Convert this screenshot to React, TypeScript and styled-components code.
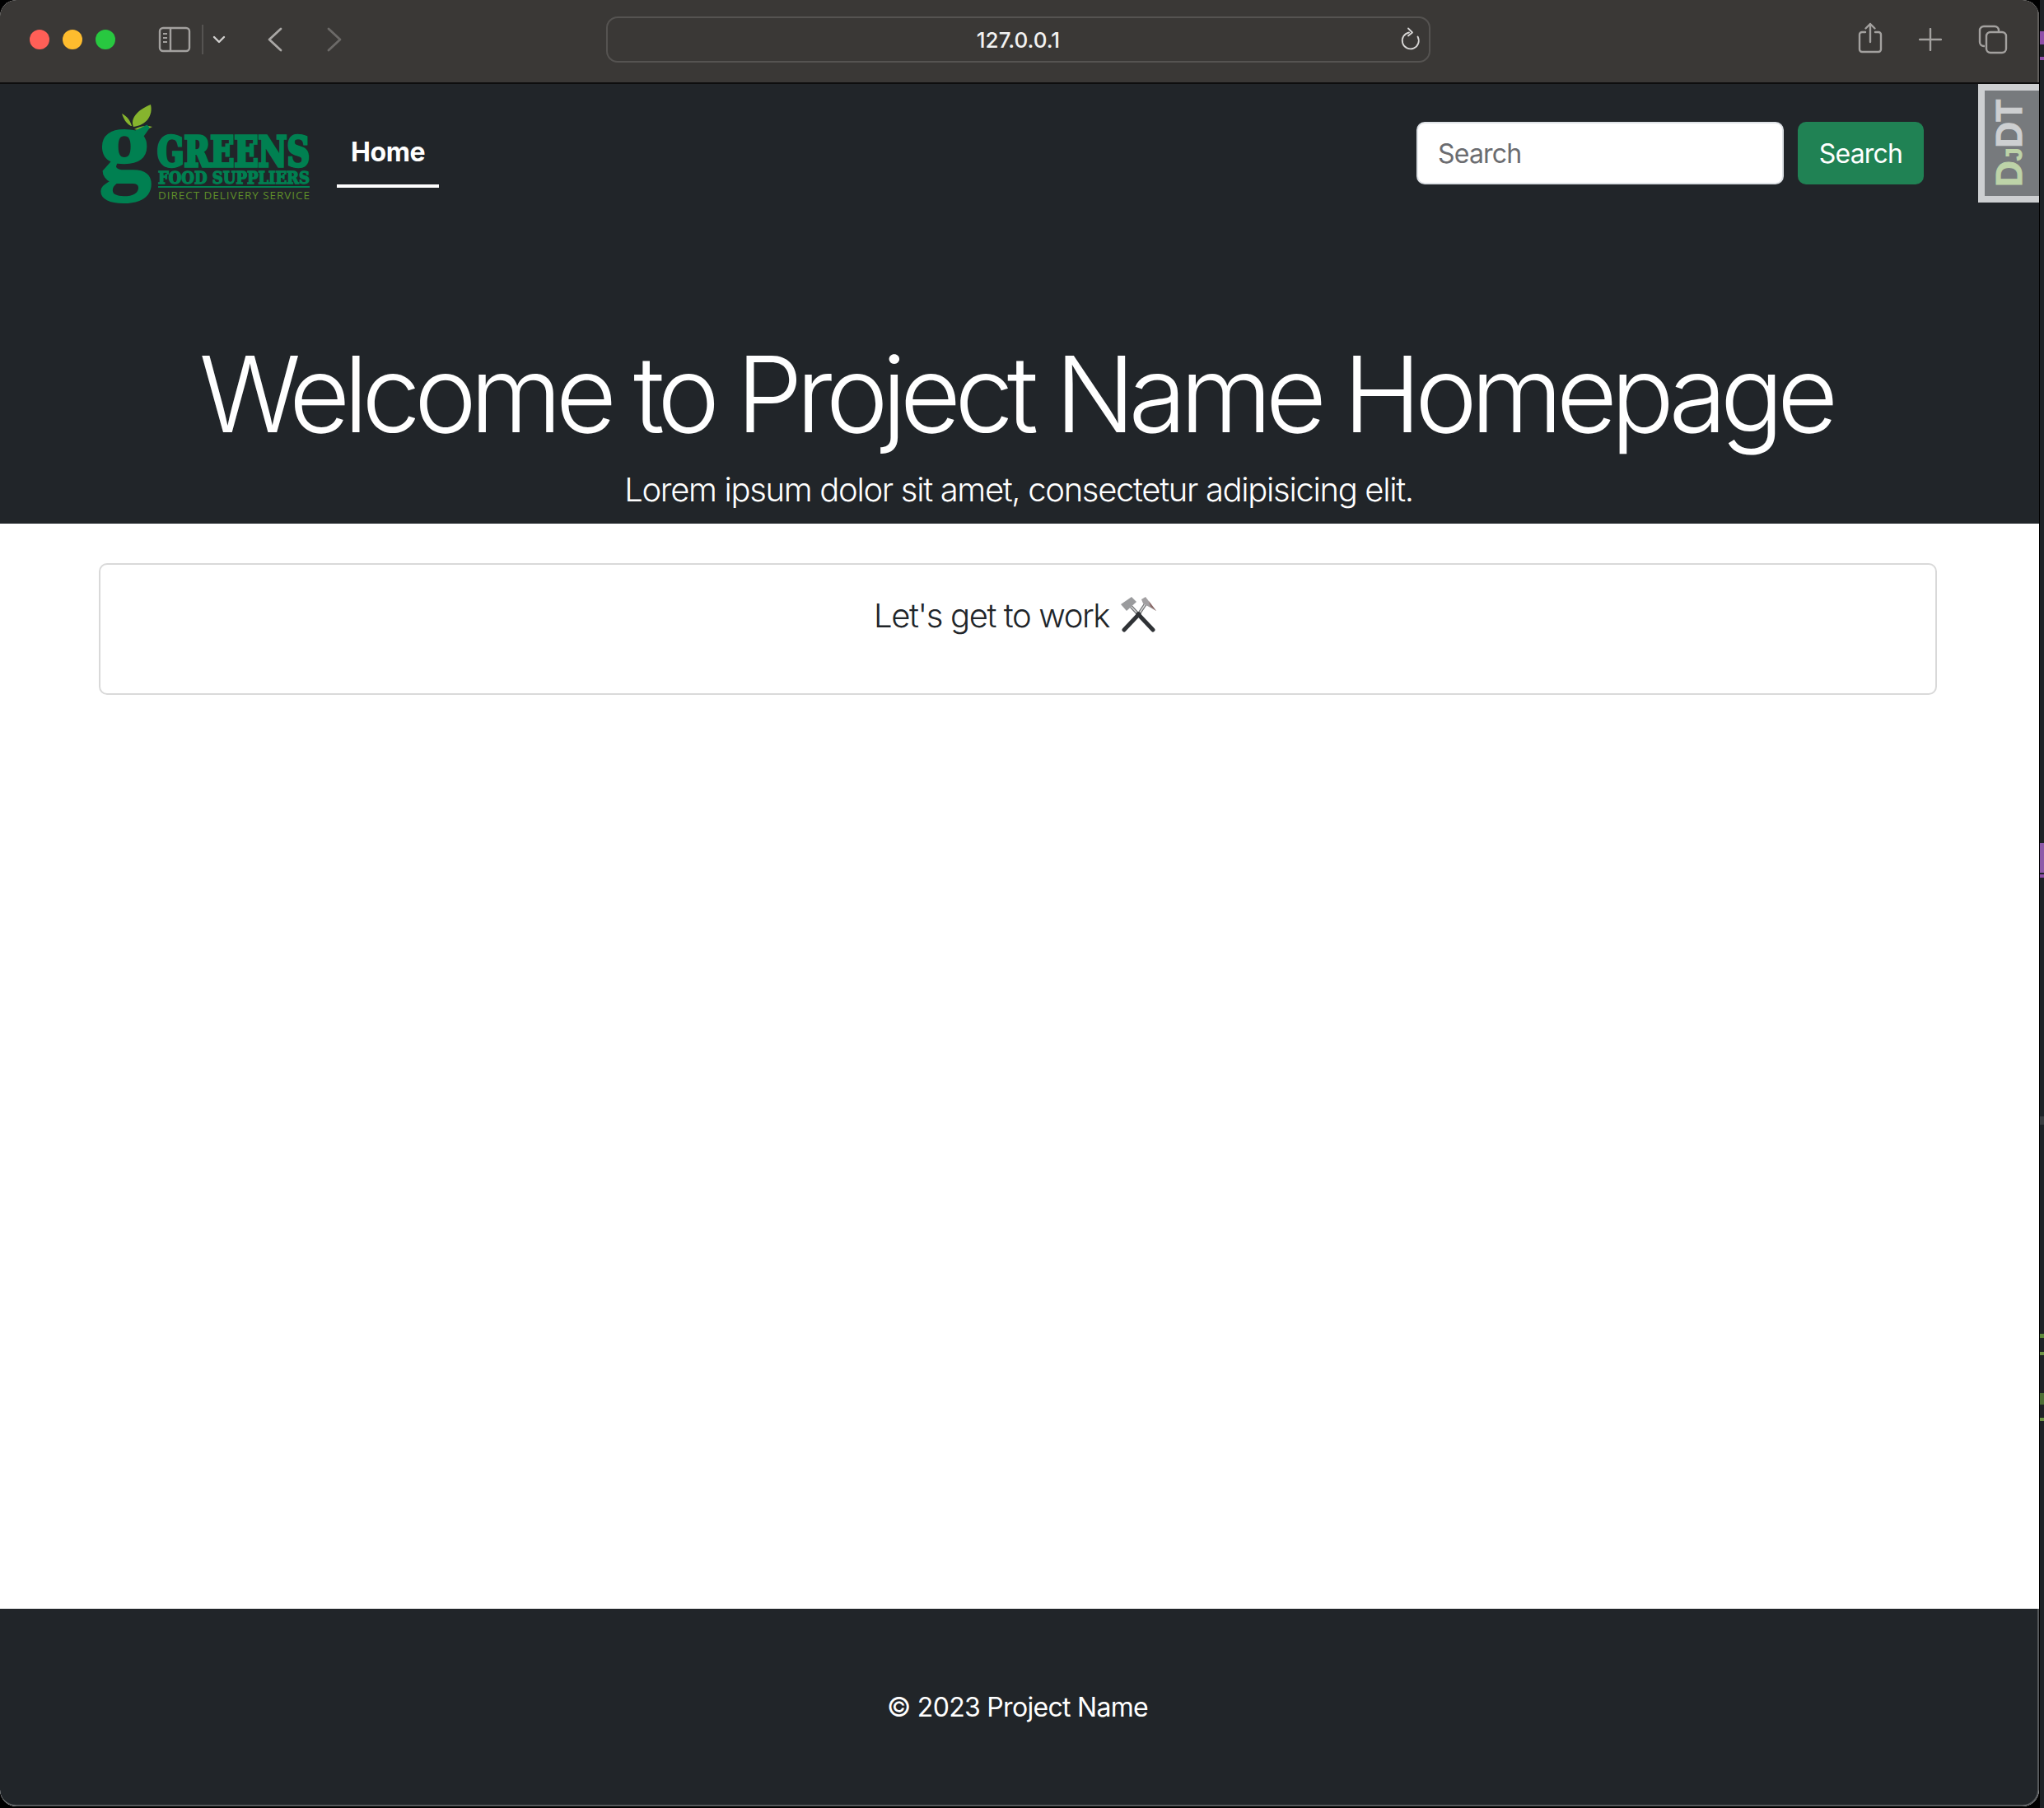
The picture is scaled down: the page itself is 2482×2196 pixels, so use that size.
import styled, { createGlobalStyle } from "styled-components";

const GlobalStyle = createGlobalStyle`
  html, body {
    margin: 0;
    padding: 0;
    background: #000;
  }
  * {
    box-sizing: border-box;
  }
`;

const stripMarks = [
  { top: 38, height: 16, color: "#8e4fa8" },
  { top: 69, height: 4, color: "#8e4fa8" },
  { top: 1024, height: 36, color: "#8e5aa8" },
  { top: 1062, height: 4, color: "#8e4fa8" },
  { top: 1356, height: 10, color: "#3a3d40" },
  { top: 1620, height: 5, color: "#5f8a3c" },
  { top: 1642, height: 4, color: "#6f9446" },
  { top: 1692, height: 14, color: "#4d6f36" },
  { top: 1722, height: 4, color: "#6f9446" },
];

function SidebarIcon() {
  return (
    <svg width="40" height="32" viewBox="0 0 40 32" fill="none" stroke="#a3a19f" strokeWidth="2.4">
      <rect x="2" y="2" width="36" height="28" rx="4" />
      <path d="M15 2v28" />
      <path d="M6 9h5M6 14h5M6 19h5" strokeWidth="2" />
    </svg>
  );
}

function Chevron({ d, dim }: { d: string; dim?: boolean }) {
  return (
    <svg width="20" height="30" viewBox="0 0 20 30" fill="none" stroke={dim ? "#6c6a68" : "#a9a7a5"} strokeWidth="2.8" strokeLinecap="round" strokeLinejoin="round">
      <path d={d} />
    </svg>
  );
}

function ReloadIcon() {
  return (
    <svg width="26" height="30" viewBox="0 0 26 30" fill="none" stroke="#d8d7d6" strokeWidth="1.8" strokeLinecap="round" strokeLinejoin="round">
      <path d="M11 6.500a10 10 0 1 0 10.500 5" />
      <path d="M10 1.500l5 5-5 4" />
    </svg>
  );
}

function ShareIcon() {
  return (
    <svg width="30" height="38" viewBox="0 0 30 38" fill="none" stroke="#a3a19f" strokeWidth="2.4" strokeLinecap="round" strokeLinejoin="round">
      <path d="M9 12H5a3 3 0 0 0-3 3v18a3 3 0 0 0 3 3h20a3 3 0 0 0 3-3V15a3 3 0 0 0-3-3h-4" />
      <path d="M15 24V2M9.500 7.500L15 2l5.500 5.500" />
    </svg>
  );
}

function PlusIcon() {
  return (
    <svg width="28" height="28" viewBox="0 0 28 28" fill="none" stroke="#a3a19f" strokeWidth="2.4" strokeLinecap="round">
      <path d="M14 1v26M1 14h26" />
    </svg>
  );
}

function TabsIcon() {
  return (
    <svg width="36" height="36" viewBox="0 0 36 36" fill="none" stroke="#a3a19f" strokeWidth="2.4">
      <path d="M8 26H7a5 5 0 0 1-5-5V7a5 5 0 0 1 5-5h13a5 5 0 0 1 5 5v2" />
      <rect x="10" y="9" width="24" height="25" rx="5" />
    </svg>
  );
}

function Logo() {
  return (
    <LogoSvg width="260" height="122" viewBox="0 0 260 122">
      <path d="M42 28C38 18 46 8 63 1C66 14 58 26 42 28Z" fill="#86b42e" />
      <path d="M39 27C33 24 30 18 28 12C34 15 38 20 40 27Z" fill="#86b42e" />
      <path d="M43 31C50 27 58 26 65 28C58 32 50 33 43 31Z" fill="#86b42e" />
      <text x="0" y="92" fontFamily="'Liberation Serif', serif" fontWeight="700" fontSize="128" fill="#008051" stroke="#008051" strokeWidth="2">g</text>
      <text x="71" y="76" textLength="185" lengthAdjust="spacingAndGlyphs" fontFamily="'DejaVu Serif Condensed', 'DejaVu Serif', serif" fontWeight="700" fontSize="50" fill="#008051" stroke="#008051" strokeWidth="3.400">GREENS</text>
      <text x="72" y="97" textLength="184" lengthAdjust="spacingAndGlyphs" fontFamily="'DejaVu Serif Condensed', 'DejaVu Serif', serif" fontWeight="700" fontSize="20" fill="#008051" stroke="#008051" strokeWidth="1.300">FOOD SUPPLIERS</text>
      <rect x="72" y="100" width="184" height="2" fill="#008051" />
      <text x="72" y="116" textLength="184" lengthAdjust="spacing" fontFamily="'Open Sans', sans-serif" fontWeight="400" fontSize="13.500" fill="#5f8f2a">DIRECT DELIVERY SERVICE</text>
    </LogoSvg>
  );
}

function HammersIcon() {
  return (
    <svg width="44" height="44" viewBox="0 0 44 44" fill="none">
      <path d="M10 9L22 22" stroke="#6d6f72" strokeWidth="4" />
      <path d="M10 9L22 22" stroke="#d8d8d8" strokeWidth="1.500" />
      <path d="M31 7L21 22" stroke="#6d6f72" strokeWidth="4" />
      <path d="M31 7L21 22" stroke="#d8d8d8" strokeWidth="1.500" />
      <path d="M21 21L39 40" stroke="#2f3236" strokeWidth="5" strokeLinecap="round" />
      <path d="M22 21L4 40" stroke="#2f3236" strokeWidth="5" strokeLinecap="round" />
      <path d="M0 9L13 0L19 6L7 17Z" fill="#9a9b9d" />
      <path d="M25 3L30 0L43 17L27 8Z" fill="#a2a0a2" />
      <path d="M34 5L43 17L36 12Z" fill="#8b6a68" />
    </svg>
  );
}

export default function App() {
  return (
    <>
      <GlobalStyle />
      <Desktop>
        <BrowserWindow>
          <Toolbar>
            <LeftTools>
              <TrafficLights>
                <Light $color="#ff5f57" />
                <Light $color="#febc2e" />
                <Light $color="#28c840" />
              </TrafficLights>
              <SidebarToggle>
                <SidebarIcon />
                <ToolbarDivider />
                <svg width="16" height="10" viewBox="0 0 16 10" fill="none" stroke="#d0cfce" strokeWidth="2.400" strokeLinecap="round" strokeLinejoin="round">
                  <path d="M2 2l6 6 6-6" />
                </svg>
              </SidebarToggle>
              <HistoryButtons>
                <Chevron d="M17 2L3 15l14 13" />
                <Chevron d="M3 2l14 13L3 28" dim />
              </HistoryButtons>
            </LeftTools>
            <AddressBar>
              <AddressText>127.0.0.1</AddressText>
              <ReloadSlot>
                <ReloadIcon />
              </ReloadSlot>
            </AddressBar>
            <RightTools>
              <ShareSlot>
                <ShareIcon />
              </ShareSlot>
              <PlusIcon />
              <TabsIcon />
            </RightTools>
          </Toolbar>

          <Masthead>
            <NavBar>
              <NavLeft>
                <Logo />
                <NavLink href="#">Home</NavLink>
              </NavLeft>
              <SearchForm onSubmit={(e) => e.preventDefault()}>
                <SearchInput placeholder="Search" />
                <SearchButton type="submit">Search</SearchButton>
              </SearchForm>
            </NavBar>
            <Hero>
              <HeroTitle>Welcome to Project Name Homepage</HeroTitle>
              <HeroLead>Lorem ipsum dolor sit amet, consectetur adipisicing elit.</HeroLead>
            </Hero>
            <DebugHandle>
              <DebugLabel>
                <DebugGreen>D<DebugSmallJ>J</DebugSmallJ></DebugGreen>DT
              </DebugLabel>
            </DebugHandle>
          </Masthead>

          <Main>
            <Card>
              <CardText>
                Let's get to work <EmojiSlot><HammersIcon /></EmojiSlot>
              </CardText>
            </Card>
          </Main>

          <Footer>
            <FooterText>© 2023 Project Name</FooterText>
          </Footer>
        </BrowserWindow>
        <DesktopStrip>
          {stripMarks.map((mark) => (
            <StripMark key={mark.top} $top={mark.top} $height={mark.height} $color={mark.color} />
          ))}
        </DesktopStrip>
      </Desktop>
    </>
  );
}

const Desktop = styled.div`
  width: 2482px;
  height: 2196px;
  display: flex;
  align-items: flex-start;
  overflow: hidden;
  background: #000;
`;

const DesktopStrip = styled.div`
  position: relative;
  flex: none;
  width: 5px;
  height: 2196px;
  margin-left: 1px;
  background: #1e2226;
`;

const StripMark = styled.span<{ $top: number; $height: number; $color: string }>`
  position: absolute;
  left: 0;
  right: 0;
  top: ${(p) => p.$top}px;
  height: ${(p) => p.$height}px;
  background: ${(p) => p.$color};
`;

const BrowserWindow = styled.div`
  width: 2476px;
  height: 2194px;
  flex: none;
  display: flex;
  flex-direction: column;
  border-radius: 20px;
  overflow: hidden;
  background: #fff;
  font-family: Inter, "Liberation Sans", sans-serif;
`;

const Toolbar = styled.header`
  height: 102px;
  flex: none;
  display: grid;
  grid-template-columns: 736px 1001px 1fr;
  align-items: start;
  padding-top: 20px;
  background: #3a3836;
  border-bottom: 2px solid #0e0e0e;
  box-shadow: inset -2px 0 #5f5d5b;
`;

const LeftTools = styled.div`
  height: 56px;
  display: flex;
  align-items: center;
  padding-left: 36px;
`;

const TrafficLights = styled.div`
  display: flex;
  gap: 16px;
`;

const Light = styled.span<{ $color: string }>`
  width: 24px;
  height: 24px;
  border-radius: 50%;
  background: ${(p) => p.$color};
`;

const SidebarToggle = styled.div`
  display: flex;
  align-items: center;
  margin-left: 52px;
`;

const ToolbarDivider = styled.span`
  width: 2px;
  height: 36px;
  margin: 0 11px 0 13px;
  background: #555351;
`;

const HistoryButtons = styled.div`
  display: flex;
  gap: 52px;
  margin-left: 50px;
`;

const AddressBar = styled.div`
  position: relative;
  height: 56px;
  display: flex;
  align-items: center;
  justify-content: center;
  border: 2px solid #555351;
  border-radius: 14px;
`;

const AddressText = styled.span`
  color: #f2f2f2;
  font-size: 26px;
  font-weight: 500;
`;

const ReloadSlot = styled.span`
  position: absolute;
  right: 9px;
  top: 11px;
  display: flex;
`;

const RightTools = styled.div`
  height: 56px;
  display: flex;
  align-items: center;
  justify-content: flex-end;
  gap: 44px;
  padding-right: 38px;
`;

const ShareSlot = styled.span`
  display: flex;
  margin-bottom: 5px;
`;

const Masthead = styled.section`
  position: relative;
  height: 534px;
  flex: none;
  display: flex;
  flex-direction: column;
  background: #212529;
  color: #fff;
`;

const NavBar = styled.nav`
  display: flex;
  align-items: flex-start;
  justify-content: space-between;
  padding: 24px 140px 0 120px;
`;

const NavLeft = styled.div`
  display: flex;
  align-items: flex-start;
`;

const LogoSvg = styled.svg`
  display: block;
  overflow: visible;
`;

const NavLink = styled.a`
  margin: 35px 0 0 29px;
  padding: 0 17px 15px;
  color: #fff;
  font-size: 32px;
  font-weight: 700;
  line-height: 48px;
  letter-spacing: -0.4px;
  text-decoration: none;
  border-bottom: 4px solid #fff;
`;

const SearchForm = styled.form`
  display: flex;
  gap: 17px;
  margin-top: 22px;
`;

const SearchInput = styled.input`
  width: 446px;
  height: 76px;
  padding: 12px 24px;
  font: 400 32px Inter, sans-serif;
  letter-spacing: -0.8px;
  color: #212529;
  background: #fff;
  border: 2px solid #dee2e6;
  border-radius: 10px;
  outline: none;

  &::placeholder {
    color: #6b6c70;
    opacity: 1;
  }
`;

const SearchButton = styled.button`
  width: 153px;
  height: 76px;
  padding: 0;
  font: 400 32px Inter, sans-serif;
  letter-spacing: -0.8px;
  color: #fff;
  background: #208254;
  border: none;
  border-radius: 10px;
`;

const Hero = styled.div`
  flex: 1;
  display: flex;
  flex-direction: column;
  align-items: center;
  justify-content: flex-end;
`;

const HeroTitle = styled.h1`
  margin: 0 10px 9px 0;
  font-size: 128px;
  font-weight: 300;
  line-height: 1.2;
  letter-spacing: -7.9px;
  white-space: nowrap;
`;

const HeroLead = styled.p`
  margin: 0 2px 11px 0;
  font-size: 40px;
  font-weight: 300;
  line-height: 60px;
  letter-spacing: -1.33px;
`;

const DebugHandle = styled.aside`
  position: absolute;
  top: 0;
  right: 0;
  width: 74px;
  height: 144px;
  display: flex;
  align-items: center;
  justify-content: center;
  background: #777a7d;
  border: 8px solid #cdcfd1;
  border-right: none;
`;

const DebugLabel = styled.span`
  flex: none;
  transform: rotate(-90deg);
  color: #cdcfd1;
  font: 700 44px/44px "Liberation Sans", sans-serif;
  white-space: nowrap;
  -webkit-text-stroke: 1px currentColor;
`;

const DebugGreen = styled.span`
  color: #bdd3a8;
`;

const DebugSmallJ = styled.span`
  font-size: 28px;
`;

const Main = styled.main`
  flex: 1;
  padding: 48px 124px 0 120px;
`;

const Card = styled.div`
  height: 160px;
  padding: 32px 38px 32px 32px;
  text-align: center;
  border: 2px solid #d9d9d9;
  border-radius: 10px;
`;

const CardText = styled.p`
  margin: 0;
  color: #212529;
  font-size: 40px;
  font-weight: 300;
  line-height: 60px;
  letter-spacing: -1.4px;
`;

const EmojiSlot = styled.span`
  display: inline-flex;
  vertical-align: -7px;
  margin-left: 4px;
`;

const Footer = styled.footer`
  height: 240px;
  flex: none;
  padding: 96px 3px 0 0;
  text-align: center;
  background: #212529;
  border: solid #55585b;
  border-width: 0 2px 2px 0;
  border-radius: 0 0 20px 20px;
`;

const FooterText = styled.p`
  margin: 0;
  color: #fff;
  font-size: 32px;
  line-height: 48px;
  letter-spacing: -0.7px;
`;
